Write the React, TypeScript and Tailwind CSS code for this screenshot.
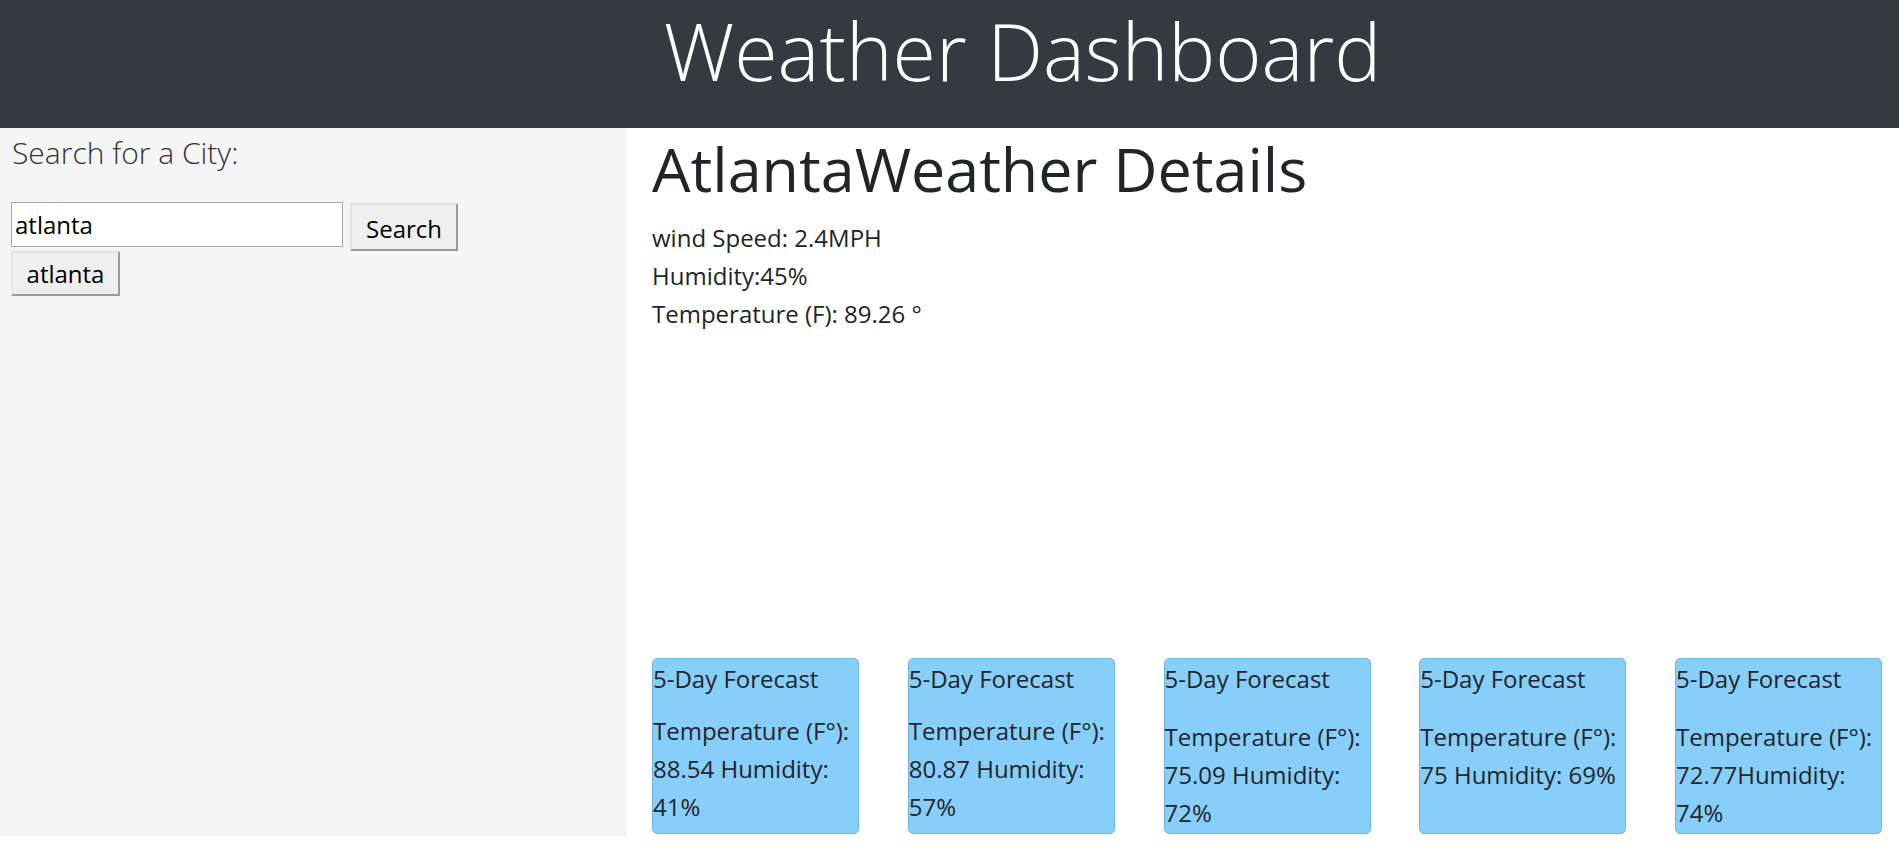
import { useState } from 'react'

const forecast = [
  { temp: '88.54', sep: ' ', humidity: '41%', offset: false },
  { temp: '80.87', sep: ' ', humidity: '57%', offset: false },
  { temp: '75.09', sep: ' ', humidity: '72%', offset: true },
  { temp: '75', sep: ' ', humidity: '69%', offset: true },
  { temp: '72.77', sep: '', humidity: '74%', offset: true },
]

export default function App() {
  const [city, setCity] = useState('atlanta')

  return (
    <div className="min-h-[860px] bg-white text-[#212529] font-['Open_Sans','Noto_Sans',sans-serif]">
      {/* Header */}
      <header className="h-[128px] bg-[#343a40] flex justify-center items-start pl-[146px]">
        <h1 className="text-white font-light text-[79px] leading-[100px] pt-[1px]">Weather Dashboard</h1>
      </header>

      <div className="flex">
        {/* Sidebar */}
        <aside className="w-[627px] shrink-0 bg-[#f5f5f5] h-[708px] pl-[11px] pt-[5px]">
          <h5 className="font-light text-[30px] leading-[40px] pl-[1px] text-[#333]">Search for a City:</h5>
          <div className="mt-[29px] flex items-start gap-[7px]">
            <input
              value={city}
              onChange={(e) => setCity(e.target.value)}
              className="w-[332px] h-[45px] bg-white border border-[#a9a9a9] px-[3px] text-[24px] text-black outline-none"
            />
            <button className="w-[108px] h-[48px] mt-[1px] bg-[#efefef] border-2 border-t-[#e3e3e3] border-l-[#e3e3e3] border-r-[#9a9a9a] border-b-[#9a9a9a] text-[24px] text-black pt-[3px]">
              Search
            </button>
          </div>
          <button className="w-[109px] h-[45px] bg-[#efefef] border-2 border-t-[#e3e3e3] border-l-[#e3e3e3] border-r-[#9a9a9a] border-b-[#9a9a9a] text-[24px] text-black">
            atlanta
          </button>
        </aside>

        {/* Main */}
        <main className="flex-1 pl-[25px] pr-[17px]">
          <h2 className="text-[61px] leading-[1] pt-[10px]">AtlantaWeather Details</h2>
          <div className="mt-[20px] text-[24px] leading-[38px]">
            <p>wind Speed: 2.4MPH</p>
            <p>Humidity:45%</p>
            <p>Temperature (F): 89.26 °</p>
          </div>

          <div className="mt-[325px] flex justify-between">
            {forecast.map((day, i) => (
              <div
                key={i}
                className="w-[207px] h-[176px] bg-[#87cefa] border border-[#6fb7e3] rounded-[5px] text-[24px] leading-[38px] pt-[1px]"
              >
                <p>5-Day Forecast</p>
                <p className={day.offset ? 'mt-[20px]' : 'mt-[14px]'}>
                  Temperature (F°): {day.temp}
                  {day.sep}Humidity: {day.humidity}
                </p>
              </div>
            ))}
          </div>
        </main>
      </div>
    </div>
  )
}
